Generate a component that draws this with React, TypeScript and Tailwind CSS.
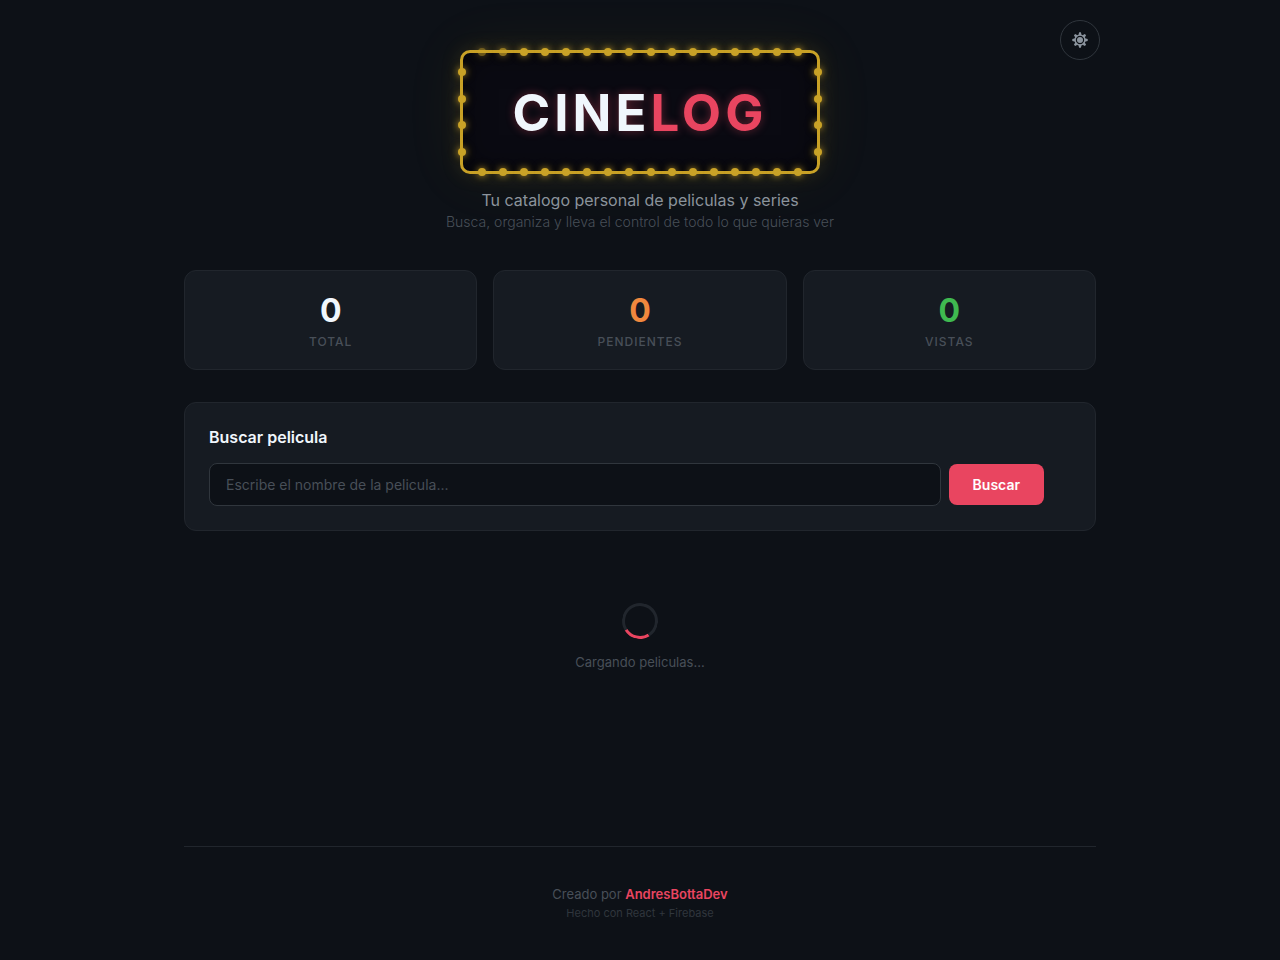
import { useState } from 'react'

const horizontalBulbs = Array.from({ length: 16 }, (_, i) => i)
const verticalBulbs = Array.from({ length: 4 }, (_, i) => i)

function Bulb({ className = '' }: { className?: string }) {
  return (
    <span
      className={`block w-2 h-2 rounded-full bg-[#c9a227] shadow-[0_0_6px_rgba(201,162,39,0.8),0_0_12px_rgba(201,162,39,0.3)] ${className}`}
    />
  )
}

function Marquee() {
  return (
    <div className="relative rounded-[10px] border-3 border-[#c9a227] bg-[#0a0a12] px-[50px] pt-[29px] pb-[27px] shadow-[0_0_20px_rgba(201,162,39,0.15),0_0_60px_rgba(201,162,39,0.08),inset_0_0_30px_rgba(0,0,0,0.5)]">
      {/* Bulbs around the frame */}
      <div className="absolute -top-[5px] left-[15px] right-[15px] flex justify-between">
        {horizontalBulbs.map((i) => (
          <Bulb key={i} className={i === 0 ? 'opacity-50' : i === 1 ? 'opacity-70' : ''} />
        ))}
      </div>
      <div className="absolute -bottom-[5px] left-[15px] right-[15px] flex justify-between">
        {horizontalBulbs.map((i) => (
          <Bulb key={i} />
        ))}
      </div>
      <div className="absolute top-[15px] bottom-[15px] -left-[5px] flex flex-col justify-between">
        {verticalBulbs.map((i) => (
          <Bulb key={i} />
        ))}
      </div>
      <div className="absolute top-[15px] bottom-[15px] -right-[5px] flex flex-col justify-between">
        {verticalBulbs.map((i) => (
          <Bulb key={i} />
        ))}
      </div>

      <h1 className="text-[51px] leading-[62px] font-bold tracking-[4px] text-[#f0f6fc] [text-shadow:0_0_10px_rgba(233,69,96,0.4)]">
        CINE<span className="text-[#e94560]">LOG</span>
      </h1>
    </div>
  )
}

function SunIcon() {
  const rays = [0, 45, 90, 135, 180, 225, 270, 315]
  return (
    <svg viewBox="0 0 16 16" className="w-4 h-4" fill="currentColor" aria-hidden="true">
      <circle cx="8" cy="8" r="3" />
      <circle cx="8" cy="8" r="4.9" fill="none" stroke="currentColor" strokeWidth="1.4" />
      {rays.map((angle) => (
        <path key={angle} d="M6.3 3.4 7.1.3h1.8l.8 3.1z" transform={`rotate(${angle} 8 8)`} />
      ))}
    </svg>
  )
}

export default function App() {
  const [query, setQuery] = useState('')

  const stats = [
    { label: 'Total', value: 0, color: 'text-[#f0f6fc]' },
    { label: 'Pendientes', value: 0, color: 'text-[#f0883e]' },
    { label: 'Vistas', value: 0, color: 'text-[#3fb950]' },
  ]

  return (
    <div className="min-h-screen bg-[#0d1117] font-['Inter',sans-serif] text-[#f0f6fc]">
      <div className="relative max-w-[960px] min-h-screen mx-auto px-6 pt-[50px] flex flex-col">
        <button
          type="button"
          aria-label="Cambiar tema"
          className="absolute top-5 right-5 w-10 h-10 rounded-full border border-[#30363d] text-[#8b949e] flex items-center justify-center"
        >
          <SunIcon />
        </button>

        <header className="flex flex-col items-center text-center">
          <Marquee />
          <p className="mt-[15px] text-base leading-[22px] text-[#8b949e]">
            Tu catalogo personal de peliculas y series
          </p>
          <p className="text-sm leading-[22px] font-light text-[#484f58]">
            Busca, organiza y lleva el control de todo lo que quieras ver
          </p>
        </header>

        {/* Stats */}
        <div className="mt-[37px] grid grid-cols-3 gap-4">
          {stats.map((stat) => (
            <div
              key={stat.label}
              className="h-[100px] pt-5 rounded-xl border border-[#21262d] bg-[#161b22] text-center"
            >
              <div className={`text-[32px] leading-10 font-bold ${stat.color}`}>{stat.value}</div>
              <div className="mt-[3px] text-xs leading-4 font-medium tracking-[1px] uppercase text-[#484f58]">
                {stat.label}
              </div>
            </div>
          ))}
        </div>

        {/* Search */}
        <section className="mt-8 p-6 rounded-xl border border-[#21262d] bg-[#161b22]">
          <h2 className="text-base leading-5 font-semibold">
            <label htmlFor="search">Buscar pelicula</label>
          </h2>
          <form
            className="mt-4 mr-[27px] flex items-center gap-2"
            onSubmit={(e) => e.preventDefault()}
          >
            <input
              id="search"
              type="text"
              value={query}
              onChange={(e) => setQuery(e.target.value)}
              placeholder="Escribe el nombre de la pelicula..."
              className="flex-1 min-w-0 h-[43px] px-4 rounded-lg border border-[#30363d] bg-[#0d1117] text-sm placeholder:text-[#484f58] outline-none"
            />
            <button
              type="submit"
              className="h-[41px] px-6 rounded-lg bg-[#e94560] text-sm font-semibold text-white"
            >
              Buscar
            </button>
          </form>
        </section>

        {/* Loading */}
        <div className="mt-[72px] flex flex-col items-center" role="status">
          <div className="w-9 h-9 rounded-full border-3 border-[#21262d] border-t-[#e94560] rotate-[193deg]" />
          <p className="mt-[13px] text-[13px] leading-5 text-[#484f58]">Cargando peliculas...</p>
        </div>

        <footer className="mt-auto h-[114px] pt-[37px] border-t border-[#21262d] text-center">
          <p className="text-[13px] leading-5 text-[#484f58]">
            Creado por{' '}
            <a href="#" className="font-semibold text-[#e94560]">
              AndresBottaDev
            </a>
          </p>
          <p className="text-[11px] leading-[18px] text-[#30363d]">Hecho con React + Firebase</p>
        </footer>
      </div>
    </div>
  )
}
